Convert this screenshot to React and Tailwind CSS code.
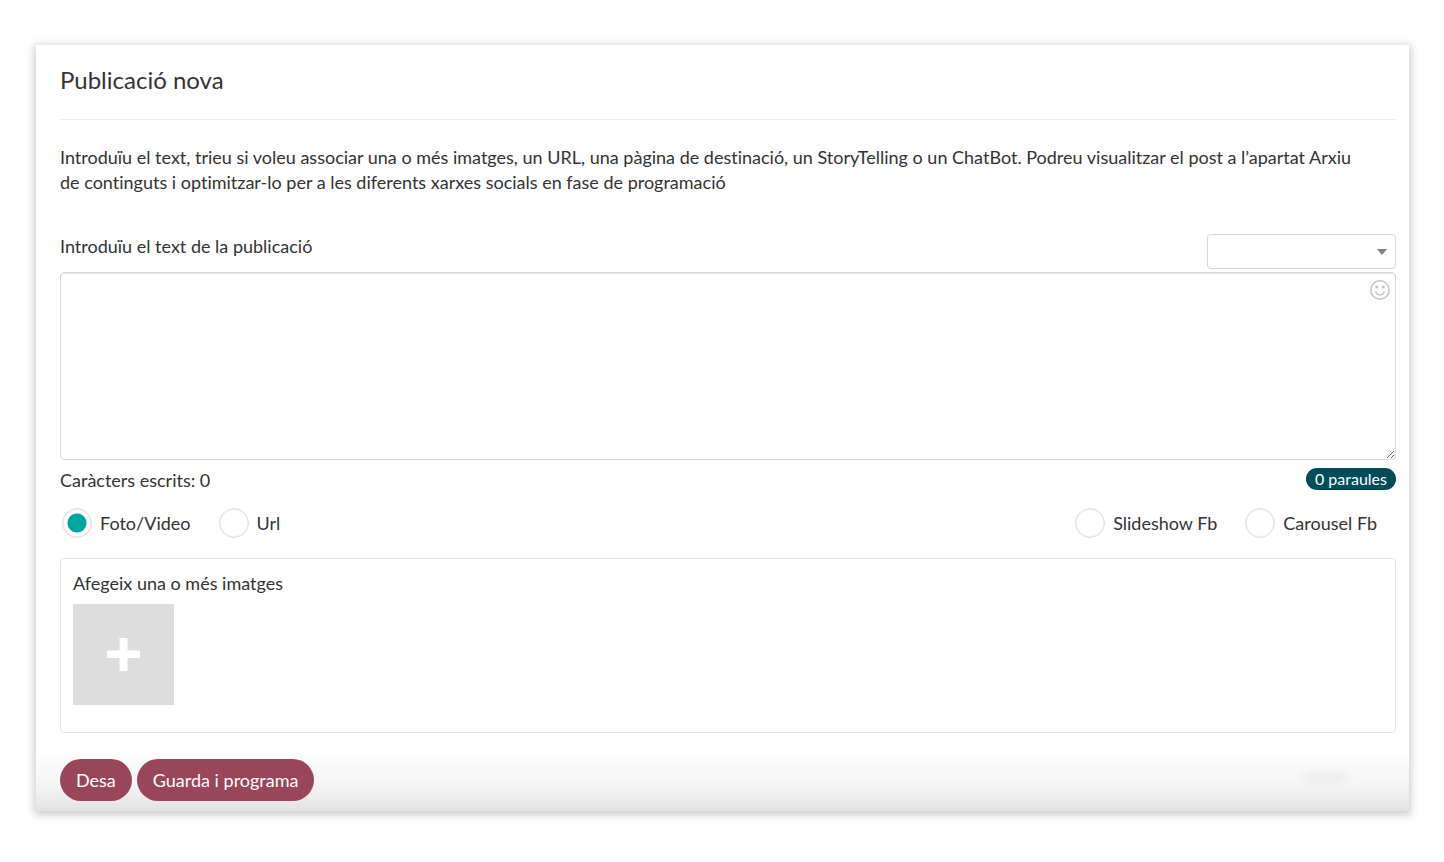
// src/App.jsx
import React, { useState } from 'react'

function RadioOption({ id, label, value, selected, onSelect }) {
  return (
    <div className="flex items-center gap-2">
      <input
        type="radio"
        id={id}
        name="postType"
        value={value}
        checked={selected === value}
        onChange={() => onSelect(value)}
        className="appearance-none shrink-0 size-[30px] rounded-full border border-[#dedede] bg-white shadow-[inset_0_0_1px_1px_#f0f0f0] checked:bg-[radial-gradient(circle,#00a69c_9px,#ffffff_10px)]"
      />
      <label htmlFor={id}>{label}</label>
    </div>
  )
}

function SmileIcon() {
  return (
    <svg className="size-5" viewBox="0 0 20 20" fill="none" stroke="#c4c4c4">
      <circle cx="10" cy="10" r="9.2" strokeWidth="1.5" />
      <circle cx="6.8" cy="7" r="1.6" fill="#c4c4c4" stroke="none" />
      <circle cx="13.2" cy="7" r="1.6" fill="#c4c4c4" stroke="none" />
      <path d="M5.7 11.8c.7 2 2.300 3.100 4.300 3.100s3.600-1.100 4.300-3.100" strokeWidth="1.4" strokeLinecap="round" />
    </svg>
  )
}

export default function App() {
  const [text, setText] = useState('')
  const [postType, setPostType] = useState('photo')
  const words = text.trim() ? text.trim().split(/\s+/).length : 0

  return (
    <div className="bg-white pt-[45px] pr-[35px] pb-12 pl-9 font-['Lato',sans-serif] text-lg leading-[25px] text-[#333333] [font-variant-ligatures:none]">
      <main className="relative bg-[linear-gradient(to_top,#e2e2e2_0px,#f4f4f4_24px,#ffffff_60px)] pt-5 pr-[13px] pb-[10px] pl-6 shadow-[0_2px_8px_2px_rgba(0,0,0,0.2)]">
        <h1 className="border-b border-[#eeeeee] pb-6 text-2xl leading-[30px]">Publicació nova</h1>

        <p className="mt-[25px] pr-6">
          Introduïu el text, trieu si voleu associar una o més imatges, un URL, una pàgina de destinació, un StoryTelling o
          un ChatBot. Podreu visualitzar el post a l’apartat Arxiu de continguts i optimitzar-lo per a les diferents xarxes
          socials en fase de programació
        </p>

        <div className="mt-[39px] flex items-start justify-between">
          <label htmlFor="postText">Introduïu el text de la publicació</label>
          <div className="relative">
            <select
              aria-label="Idioma"
              className="block h-[35px] w-[189px] appearance-none rounded border border-[#d6d6d6] bg-white px-2"
            >
              <option value=""></option>
            </select>
            <svg
              className="pointer-events-none absolute top-[15px] right-[9px] h-[6px] w-[10px]"
              viewBox="0 0 10 6"
              fill="#808080"
            >
              <path d="M0 0h10L5 6z" />
            </svg>
          </div>
        </div>

        <div className="relative mt-[3px]">
          <textarea
            id="postText"
            value={text}
            onChange={(e) => setText(e.target.value)}
            className="block h-[188px] w-full resize rounded border border-[#d6d6d6] bg-white py-2 pr-9 pl-3 shadow-[inset_0_1px_1px_rgba(0,0,0,0.1)]"
          />
          <button type="button" aria-label="Emoji" className="absolute top-2 right-[6px]">
            <SmileIcon />
          </button>
        </div>

        <div className="mt-2 flex items-start justify-between">
          <span>Caràcters escrits: {text.length}</span>
          <span className="rounded-full bg-[#004d57] px-[9px] text-base leading-[22px] text-white">{words} paraules</span>
        </div>

        <div className="mt-[15px] flex justify-between pr-[19px] pl-[2px]">
          <div className="flex gap-7">
            <RadioOption id="photo" label="Foto/Video" value="photo" selected={postType} onSelect={setPostType} />
            <RadioOption id="url" label="Url" value="url" selected={postType} onSelect={setPostType} />
          </div>
          <div className="flex gap-7">
            <RadioOption id="slideshow" label="Slideshow Fb" value="slideshow" selected={postType} onSelect={setPostType} />
            <RadioOption id="carousel" label="Carousel Fb" value="carousel" selected={postType} onSelect={setPostType} />
          </div>
        </div>

        <section className="mt-5 rounded border border-[#e6e6e6] px-3 pt-3 pb-[27px]">
          <p>Afegeix una o més imatges</p>
          <button
            type="button"
            aria-label="Afegeix"
            className="mt-2 flex size-[101px] items-center justify-center bg-[#dddddd]"
          >
            <svg className="size-[33px]" viewBox="0 0 33 33" fill="#ffffff">
              <path d="M12.500 0h8v12.500h12.500v7.500H20.500v13h-8V20H0v-7.500h12.500z" />
            </svg>
          </button>
        </section>

        <div className="mt-[26px] flex gap-[5px]">
          <button type="button" className="h-[42px] rounded-full bg-[#99465a] px-4 text-white">
            Desa
          </button>
          <button type="button" className="h-[42px] rounded-full bg-[#99465a] px-4 text-white">
            Guarda i programa
          </button>
        </div>

        <div className="pointer-events-none absolute right-[62px] bottom-[30px] h-2 w-11 rounded-full bg-black/5 blur-[4px]" />
      </main>
    </div>
  )
}
